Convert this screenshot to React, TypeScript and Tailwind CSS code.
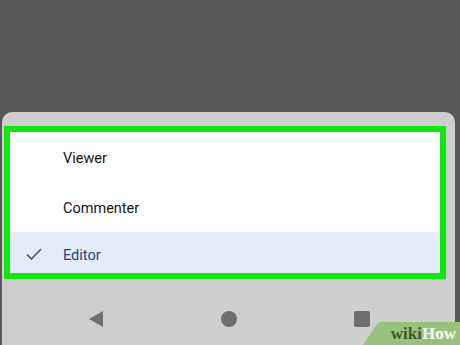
import React from "react";

export default function App() {
  return (
    <div className="w-[460px] h-[345px] overflow-hidden bg-[#575757] flex flex-col" style={{ fontFamily: "Roboto, 'Noto Sans', sans-serif" }}>
      <div className="h-[112px] shrink-0"></div>
      <div className="flex-1 ml-[2px] mr-[5px] rounded-t-[10px] bg-[#cecece] flex flex-col relative">
        <div className="mt-[14px] ml-[2px] w-[442px] border-[6px] border-[#0fe60f] bg-white flex flex-col">
          <div className="h-[54px] flex items-center pl-[53px] text-[14.5px] text-[#161616]">
            Viewer
          </div>
          <div className="h-[46px] flex items-center pl-[53px] text-[14.5px] text-[#161616]">
            Commenter
          </div>
          <div className="h-[41px] flex items-center pt-[7px] bg-[#e2ebf7] text-[14.5px] text-[#1f4585]">
            <svg width="16" height="12" viewBox="0 0 16 12" className="ml-[16px] mr-[21px] mb-[4px]">
              <path d="M1 6.5 L5.5 11 L15 1" fill="none" stroke="#3b5680" strokeWidth="1.6" />
            </svg>
            Editor
          </div>
        </div>
        <div className="flex-1 flex items-center justify-center gap-[117px] pt-[14px]">
          <svg width="16" height="18" viewBox="0 0 16 18">
            <path d="M15 1 L15 17 L1 9 Z" fill="#6f6f6f" />
          </svg>
          <div className="w-[16px] h-[16px] rounded-full bg-[#6f6f6f]"></div>
          <div className="w-[16px] h-[16px] rounded-[2px] bg-[#6f6f6f]"></div>
        </div>
        <div className="absolute right-[-5px] bottom-0 h-[23px] w-[97px]">
          <svg width="97" height="23" viewBox="0 0 97 23" className="absolute inset-0">
            <path d="M0 23 L14 2 Q15 0 18 0 L97 0 L97 23 Z" fill="#9ac07e" />
          </svg>
          <div className="absolute right-[4px] bottom-[3px] text-[17px] font-bold leading-none" style={{ fontFamily: "'Liberation Serif', serif" }}>
            <span className="text-[#3d5a2c]">wiki</span>
            <span className="text-white">How</span>
          </div>
        </div>
      </div>
    </div>
  );
}
